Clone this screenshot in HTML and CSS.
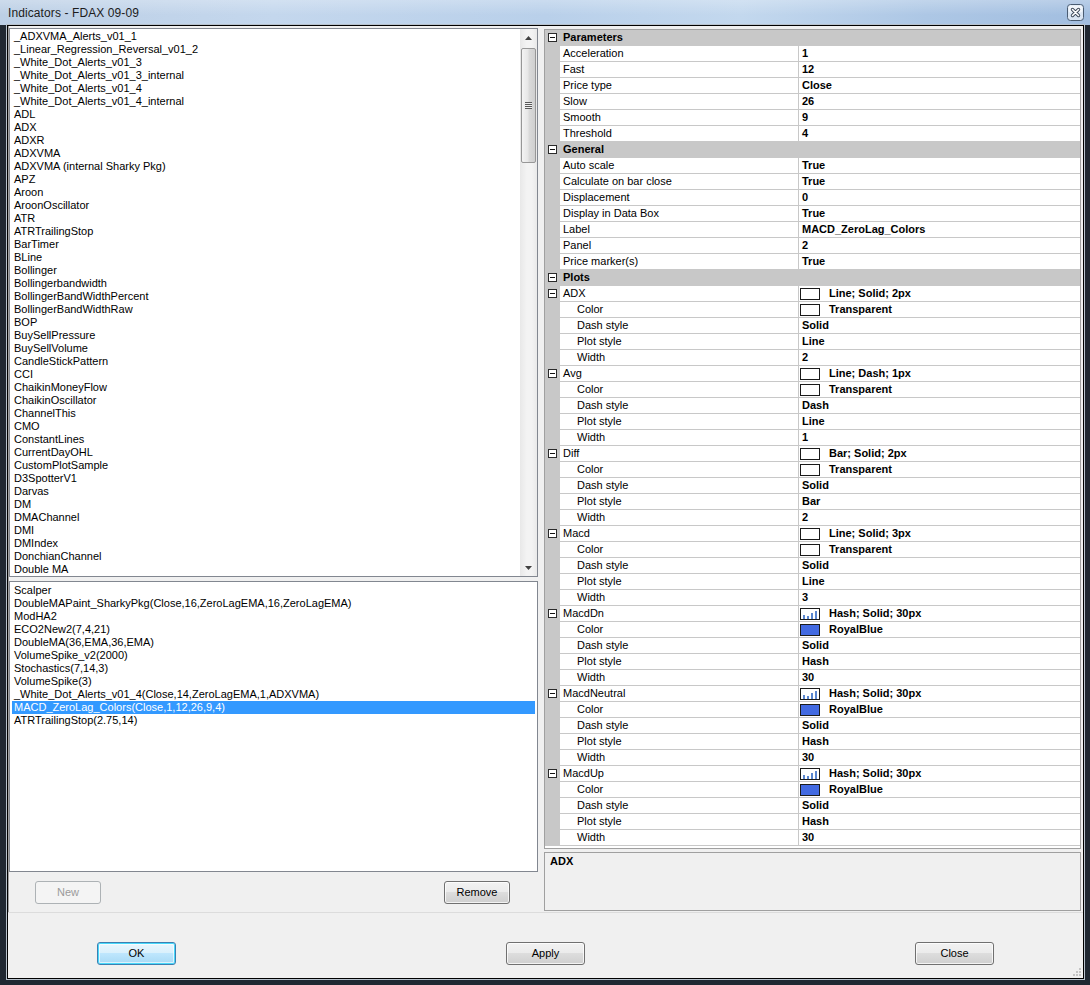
FILE: index.html
```html
<!DOCTYPE html>
<html lang="en">
<head>
  <meta charset="UTF-8">
  <title>Indicators - FDAX 09-09</title>
  <link rel="stylesheet" href="styles.css">
</head>
<body>
  <div class="window">
    <div class="titlebar">
      <span class="title">Indicators - FDAX 09-09</span>
      <button class="close-x">
        <svg width="17" height="17" viewBox="0 0 17 17">
          <rect x="0.5" y="0.5" width="16" height="16" rx="3" fill="#dbe6f3" stroke="#4a5c72"/>
          <rect x="1.5" y="1.5" width="14" height="7" rx="2" fill="#f2f6fb"/>
          <path d="M5.5 5.5L11.5 11.5M11.5 5.5L5.5 11.5" stroke="#3a4656" stroke-width="3.4" stroke-linecap="round"/>
          <path d="M5.5 5.5L11.5 11.5M11.5 5.5L5.5 11.5" stroke="#ffffff" stroke-width="1.6" stroke-linecap="round"/>
        </svg>
      </button>
    </div>
    <div class="frame">
      <div class="client">
        <div class="main">
          <div class="left">
            <div class="listbox list-top">
              <div class="items">
                <div class="item">_ADXVMA_Alerts_v01_1</div>
                <div class="item">_Linear_Regression_Reversal_v01_2</div>
                <div class="item">_White_Dot_Alerts_v01_3</div>
                <div class="item">_White_Dot_Alerts_v01_3_internal</div>
                <div class="item">_White_Dot_Alerts_v01_4</div>
                <div class="item">_White_Dot_Alerts_v01_4_internal</div>
                <div class="item">ADL</div>
                <div class="item">ADX</div>
                <div class="item">ADXR</div>
                <div class="item">ADXVMA</div>
                <div class="item">ADXVMA (internal Sharky Pkg)</div>
                <div class="item">APZ</div>
                <div class="item">Aroon</div>
                <div class="item">AroonOscillator</div>
                <div class="item">ATR</div>
                <div class="item">ATRTrailingStop</div>
                <div class="item">BarTimer</div>
                <div class="item">BLine</div>
                <div class="item">Bollinger</div>
                <div class="item">Bollingerbandwidth</div>
                <div class="item">BollingerBandWidthPercent</div>
                <div class="item">BollingerBandWidthRaw</div>
                <div class="item">BOP</div>
                <div class="item">BuySellPressure</div>
                <div class="item">BuySellVolume</div>
                <div class="item">CandleStickPattern</div>
                <div class="item">CCI</div>
                <div class="item">ChaikinMoneyFlow</div>
                <div class="item">ChaikinOscillator</div>
                <div class="item">ChannelThis</div>
                <div class="item">CMO</div>
                <div class="item">ConstantLines</div>
                <div class="item">CurrentDayOHL</div>
                <div class="item">CustomPlotSample</div>
                <div class="item">D3SpotterV1</div>
                <div class="item">Darvas</div>
                <div class="item">DM</div>
                <div class="item">DMAChannel</div>
                <div class="item">DMI</div>
                <div class="item">DMIndex</div>
                <div class="item">DonchianChannel</div>
                <div class="item">Double MA</div>
              </div>
              <div class="vscroll">
                <div class="sb-btn">
                  <svg width="7" height="4" viewBox="0 0 7 4"><path d="M3.5 0L7 4H0Z" fill="#404040"/></svg>
                </div>
                <div class="sb-track">
                  <div class="sb-thumb">
                    <div class="grip"></div>
                  </div>
                </div>
                <div class="sb-btn">
                  <svg width="7" height="4" viewBox="0 0 7 4"><path d="M0 0H7L3.5 4Z" fill="#404040"/></svg>
                </div>
              </div>
            </div>

            <div class="listbox list-bottom">
              <div class="item">Scalper</div>
              <div class="item">DoubleMAPaint_SharkyPkg(Close,16,ZeroLagEMA,16,ZeroLagEMA)</div>
              <div class="item">ModHA2</div>
              <div class="item">ECO2New2(7,4,21)</div>
              <div class="item">DoubleMA(36,EMA,36,EMA)</div>
              <div class="item">VolumeSpike_v2(2000)</div>
              <div class="item">Stochastics(7,14,3)</div>
              <div class="item">VolumeSpike(3)</div>
              <div class="item">_White_Dot_Alerts_v01_4(Close,14,ZeroLagEMA,1,ADXVMA)</div>
              <div class="item selected">MACD_ZeroLag_Colors(Close,1,12,26,9,4)</div>
              <div class="item">ATRTrailingStop(2.75,14)</div>
            </div>

            <div class="left-buttons">
              <button class="btn small" disabled>New</button>
              <button class="btn small">Remove</button>
            </div>
          </div>

          <div class="right">
            <div class="propgrid">
              <div class="pg-row cat"><div class="pg-gutter"><span class="minus"></span></div><div class="pg-name">Parameters</div></div>
              <div class="pg-row"><div class="pg-gutter"></div><div class="pg-name">Acceleration</div><div class="pg-value">1</div></div>
              <div class="pg-row"><div class="pg-gutter"></div><div class="pg-name">Fast</div><div class="pg-value">12</div></div>
              <div class="pg-row"><div class="pg-gutter"></div><div class="pg-name">Price type</div><div class="pg-value">Close</div></div>
              <div class="pg-row"><div class="pg-gutter"></div><div class="pg-name">Slow</div><div class="pg-value">26</div></div>
              <div class="pg-row"><div class="pg-gutter"></div><div class="pg-name">Smooth</div><div class="pg-value">9</div></div>
              <div class="pg-row"><div class="pg-gutter"></div><div class="pg-name">Threshold</div><div class="pg-value">4</div></div>

              <div class="pg-row cat"><div class="pg-gutter"><span class="minus"></span></div><div class="pg-name">General</div></div>
              <div class="pg-row"><div class="pg-gutter"></div><div class="pg-name">Auto scale</div><div class="pg-value">True</div></div>
              <div class="pg-row"><div class="pg-gutter"></div><div class="pg-name">Calculate on bar close</div><div class="pg-value">True</div></div>
              <div class="pg-row"><div class="pg-gutter"></div><div class="pg-name">Displacement</div><div class="pg-value">0</div></div>
              <div class="pg-row"><div class="pg-gutter"></div><div class="pg-name">Display in Data Box</div><div class="pg-value">True</div></div>
              <div class="pg-row"><div class="pg-gutter"></div><div class="pg-name">Label</div><div class="pg-value">MACD_ZeroLag_Colors</div></div>
              <div class="pg-row"><div class="pg-gutter"></div><div class="pg-name">Panel</div><div class="pg-value">2</div></div>
              <div class="pg-row"><div class="pg-gutter"></div><div class="pg-name">Price marker(s)</div><div class="pg-value">True</div></div>

              <div class="pg-row cat"><div class="pg-gutter"><span class="minus"></span></div><div class="pg-name">Plots</div></div>

              <div class="pg-row"><div class="pg-gutter"><span class="minus"></span></div><div class="pg-name">ADX</div><div class="pg-value swatched"><span class="swatch"></span>Line; Solid; 2px</div></div>
              <div class="pg-row"><div class="pg-gutter"></div><div class="pg-name sub">Color</div><div class="pg-value swatched"><span class="swatch"></span>Transparent</div></div>
              <div class="pg-row"><div class="pg-gutter"></div><div class="pg-name sub">Dash style</div><div class="pg-value">Solid</div></div>
              <div class="pg-row"><div class="pg-gutter"></div><div class="pg-name sub">Plot style</div><div class="pg-value">Line</div></div>
              <div class="pg-row"><div class="pg-gutter"></div><div class="pg-name sub">Width</div><div class="pg-value">2</div></div>

              <div class="pg-row"><div class="pg-gutter"><span class="minus"></span></div><div class="pg-name">Avg</div><div class="pg-value swatched"><span class="swatch"></span>Line; Dash; 1px</div></div>
              <div class="pg-row"><div class="pg-gutter"></div><div class="pg-name sub">Color</div><div class="pg-value swatched"><span class="swatch"></span>Transparent</div></div>
              <div class="pg-row"><div class="pg-gutter"></div><div class="pg-name sub">Dash style</div><div class="pg-value">Dash</div></div>
              <div class="pg-row"><div class="pg-gutter"></div><div class="pg-name sub">Plot style</div><div class="pg-value">Line</div></div>
              <div class="pg-row"><div class="pg-gutter"></div><div class="pg-name sub">Width</div><div class="pg-value">1</div></div>

              <div class="pg-row"><div class="pg-gutter"><span class="minus"></span></div><div class="pg-name">Diff</div><div class="pg-value swatched"><span class="swatch"></span>Bar; Solid; 2px</div></div>
              <div class="pg-row"><div class="pg-gutter"></div><div class="pg-name sub">Color</div><div class="pg-value swatched"><span class="swatch"></span>Transparent</div></div>
              <div class="pg-row"><div class="pg-gutter"></div><div class="pg-name sub">Dash style</div><div class="pg-value">Solid</div></div>
              <div class="pg-row"><div class="pg-gutter"></div><div class="pg-name sub">Plot style</div><div class="pg-value">Bar</div></div>
              <div class="pg-row"><div class="pg-gutter"></div><div class="pg-name sub">Width</div><div class="pg-value">2</div></div>

              <div class="pg-row"><div class="pg-gutter"><span class="minus"></span></div><div class="pg-name">Macd</div><div class="pg-value swatched"><span class="swatch"></span>Line; Solid; 3px</div></div>
              <div class="pg-row"><div class="pg-gutter"></div><div class="pg-name sub">Color</div><div class="pg-value swatched"><span class="swatch"></span>Transparent</div></div>
              <div class="pg-row"><div class="pg-gutter"></div><div class="pg-name sub">Dash style</div><div class="pg-value">Solid</div></div>
              <div class="pg-row"><div class="pg-gutter"></div><div class="pg-name sub">Plot style</div><div class="pg-value">Line</div></div>
              <div class="pg-row"><div class="pg-gutter"></div><div class="pg-name sub">Width</div><div class="pg-value">3</div></div>

              <div class="pg-row"><div class="pg-gutter"><span class="minus"></span></div><div class="pg-name">MacdDn</div><div class="pg-value swatched"><svg class="hash" width="20" height="12" viewBox="0 0 20 12"><rect x="0.5" y="0.5" width="19" height="11" fill="#fff" stroke="#1a1a1a"/><rect x="3" y="7" width="2" height="4" fill="#5a86cf"/><rect x="7" y="8" width="2" height="3" fill="#5a86cf"/><rect x="11" y="5" width="2" height="6" fill="#5a86cf"/><rect x="15" y="3" width="2" height="8" fill="#5a86cf"/></svg>Hash; Solid; 30px</div></div>
              <div class="pg-row"><div class="pg-gutter"></div><div class="pg-name sub">Color</div><div class="pg-value swatched"><span class="swatch royal"></span>RoyalBlue</div></div>
              <div class="pg-row"><div class="pg-gutter"></div><div class="pg-name sub">Dash style</div><div class="pg-value">Solid</div></div>
              <div class="pg-row"><div class="pg-gutter"></div><div class="pg-name sub">Plot style</div><div class="pg-value">Hash</div></div>
              <div class="pg-row"><div class="pg-gutter"></div><div class="pg-name sub">Width</div><div class="pg-value">30</div></div>

              <div class="pg-row"><div class="pg-gutter"><span class="minus"></span></div><div class="pg-name">MacdNeutral</div><div class="pg-value swatched"><svg class="hash" width="20" height="12" viewBox="0 0 20 12"><rect x="0.5" y="0.5" width="19" height="11" fill="#fff" stroke="#1a1a1a"/><rect x="3" y="7" width="2" height="4" fill="#5a86cf"/><rect x="7" y="8" width="2" height="3" fill="#5a86cf"/><rect x="11" y="5" width="2" height="6" fill="#5a86cf"/><rect x="15" y="3" width="2" height="8" fill="#5a86cf"/></svg>Hash; Solid; 30px</div></div>
              <div class="pg-row"><div class="pg-gutter"></div><div class="pg-name sub">Color</div><div class="pg-value swatched"><span class="swatch royal"></span>RoyalBlue</div></div>
              <div class="pg-row"><div class="pg-gutter"></div><div class="pg-name sub">Dash style</div><div class="pg-value">Solid</div></div>
              <div class="pg-row"><div class="pg-gutter"></div><div class="pg-name sub">Plot style</div><div class="pg-value">Hash</div></div>
              <div class="pg-row"><div class="pg-gutter"></div><div class="pg-name sub">Width</div><div class="pg-value">30</div></div>

              <div class="pg-row"><div class="pg-gutter"><span class="minus"></span></div><div class="pg-name">MacdUp</div><div class="pg-value swatched"><svg class="hash" width="20" height="12" viewBox="0 0 20 12"><rect x="0.5" y="0.5" width="19" height="11" fill="#fff" stroke="#1a1a1a"/><rect x="3" y="7" width="2" height="4" fill="#5a86cf"/><rect x="7" y="8" width="2" height="3" fill="#5a86cf"/><rect x="11" y="5" width="2" height="6" fill="#5a86cf"/><rect x="15" y="3" width="2" height="8" fill="#5a86cf"/></svg>Hash; Solid; 30px</div></div>
              <div class="pg-row"><div class="pg-gutter"></div><div class="pg-name sub">Color</div><div class="pg-value swatched"><span class="swatch royal"></span>RoyalBlue</div></div>
              <div class="pg-row"><div class="pg-gutter"></div><div class="pg-name sub">Dash style</div><div class="pg-value">Solid</div></div>
              <div class="pg-row"><div class="pg-gutter"></div><div class="pg-name sub">Plot style</div><div class="pg-value">Hash</div></div>
              <div class="pg-row"><div class="pg-gutter"></div><div class="pg-name sub">Width</div><div class="pg-value">30</div></div>
            </div>
            <div class="description">ADX</div>
          </div>
        </div>

        <div class="footer">
          <button class="btn default">OK</button>
          <button class="btn">Apply</button>
          <button class="btn">Close</button>
        </div>

        <svg class="grip-corner" width="10" height="10" viewBox="0 0 10 10">
          <rect x="7" y="1" width="2" height="2" fill="#c4c4c4"/>
          <rect x="4" y="4" width="2" height="2" fill="#c4c4c4"/>
          <rect x="7" y="4" width="2" height="2" fill="#c4c4c4"/>
          <rect x="1" y="7" width="2" height="2" fill="#c4c4c4"/>
          <rect x="4" y="7" width="2" height="2" fill="#c4c4c4"/>
          <rect x="7" y="7" width="2" height="2" fill="#c4c4c4"/>
        </svg>
      </div>
    </div>
  </div>
</body>
</html>
```

FILE: styles.css
```css
* {
  box-sizing: border-box;
}
body {
  margin: 0;
  padding: 0;
  font-family: "Liberation Sans", Arial, sans-serif;
  font-size: 11px;
  color: #000;
}
button {
  font-family: inherit;
  font-size: 11px;
}

.window {
  width: 1090px;
  height: 985px;
  display: flex;
  flex-direction: column;
  background: #202832;
}
.titlebar {
  height: 25px;
  flex: none;
  display: flex;
  align-items: center;
  justify-content: space-between;
  padding: 0 6px 0 8px;
  background:
    linear-gradient(180deg, rgba(255,255,255,0.25), rgba(255,255,255,0) 60%),
    linear-gradient(90deg, #bccfe5 0%, #c4d7ed 25%, #b9d0ea 50%, #c3d8ee 68%, #adc7e5 85%, #a2bee0 100%);
}
.title {
  font-size: 12px;
  color: #1c1c1c;
  letter-spacing: 0.1px;
}
.close-x {
  width: 17px;
  height: 17px;
  padding: 0;
  border: none;
  background: transparent;
  display: block;
}
.close-x svg {
  display: block;
}

.frame {
  flex: 1;
  display: flex;
  padding: 0 6px 6px 7px;
}
.client {
  flex: 1;
  position: relative;
  display: flex;
  flex-direction: column;
  background: #f0f0f0;
  border: 1px solid #000;
  box-shadow: 0 0 0 1px #b8c2cc;
}

.main {
  height: 887px;
  flex: none;
  display: flex;
  border-bottom: 1px solid #dcdcdc;
}
.left {
  width: 533px;
  flex: none;
  display: flex;
  flex-direction: column;
  padding-top: 2px;
  border-left: 1px solid #a0a0a0;
}
.listbox {
  width: 529px;
  background: #fff;
  border: 1px solid #828790;
}
.list-top {
  height: 549px;
  display: flex;
}
.list-top .items {
  flex: 1;
  padding: 1px 2px;
  overflow: hidden;
}
.list-bottom {
  height: 291px;
  margin-top: 4px;
  padding: 2px 2px;
}
.item {
  height: 13px;
  line-height: 13px;
  padding-left: 2px;
  white-space: nowrap;
}
.item.selected {
  background: #3399ff;
  color: #fff;
}

.vscroll {
  width: 17px;
  flex: none;
  display: flex;
  flex-direction: column;
  background: linear-gradient(90deg, #e8e8e8, #f3f3f3 40%, #f3f3f3 70%, #e9e9e9);
}
.sb-btn {
  height: 17px;
  display: flex;
  align-items: center;
  justify-content: center;
}
.sb-btn svg {
  display: block;
}
.sb-track {
  flex: 1;
  padding: 2px 1px 0 1px;
}
.sb-thumb {
  height: 115px;
  border: 1px solid #979797;
  border-radius: 2px;
  background: linear-gradient(90deg, #f4f4f4, #e7e7e7 45%, #dadada 55%, #cfcfcf);
  display: flex;
  align-items: center;
  justify-content: center;
}
.grip {
  width: 7px;
  height: 7px;
  background: repeating-linear-gradient(180deg, #595959 0, #595959 1px, #f0f0f0 1px, #f0f0f0 2px);
}

.left-buttons {
  width: 529px;
  display: flex;
  justify-content: space-between;
  margin-top: 9px;
  padding: 0 28px 0 26px;
}

.btn {
  width: 79px;
  height: 23px;
  padding: 0 0 1px 0;
  border: 1px solid #707070;
  border-radius: 3px;
  color: #000;
  background: linear-gradient(180deg, #f2f2f2 0%, #ebebeb 48%, #dddddd 50%, #cfcfcf 100%);
  box-shadow: inset 0 0 0 1px rgba(255,255,255,0.75);
}
.btn.small {
  width: 66px;
}
.btn.default {
  border-color: #3c7fb1;
  box-shadow: inset 0 0 0 1px #48d8fb, inset 0 0 0 2px rgba(255,255,255,0.6);
  background: linear-gradient(180deg, #eaf6fd 0%, #d9f0fc 48%, #bee6fd 50%, #a7d9f5 100%);
}
.btn:disabled {
  border-color: #adb2b5;
  color: #9b9b9b;
  background: #f4f4f4;
  box-shadow: none;
}

.right {
  flex: 1;
  display: flex;
  flex-direction: column;
  padding: 3px 2px 0 3px;
}
.propgrid {
  height: 820px;
  flex: none;
  background: #fff;
  border: 1px solid #a0a0a0;
  overflow: hidden;
}
.pg-row {
  height: 16px;
  display: flex;
  border-bottom: 1px solid #c8c8c8;
  line-height: 15px;
}
.pg-gutter {
  width: 15px;
  flex: none;
  background: #c8c8c8;
  display: flex;
  align-items: center;
  justify-content: center;
}
.minus {
  width: 9px;
  height: 9px;
  border: 1px solid #2b2b2b;
  background: #fff linear-gradient(#111, #111) center / 5px 1px no-repeat;
}
.pg-name {
  width: 239px;
  flex: none;
  padding-left: 3px;
  border-right: 1px solid #c8c8c8;
  white-space: nowrap;
  overflow: hidden;
}
.pg-name.sub {
  padding-left: 17px;
}
.pg-value {
  flex: 1;
  padding-left: 3px;
  font-weight: bold;
  white-space: nowrap;
  display: flex;
  align-items: center;
}
.pg-value.swatched {
  padding-left: 1px;
}
.swatch {
  width: 20px;
  height: 12px;
  margin-right: 9px;
  border: 1px solid #1a1a1a;
  background: #fff;
  flex: none;
}
.swatch.royal {
  background: #4169e1;
}
.hash {
  margin-right: 9px;
  flex: none;
  display: block;
}
.pg-row.cat {
  background: #c8c8c8;
}
.pg-row.cat .pg-name {
  flex: 1;
  border-right: none;
  font-weight: bold;
}

.description {
  height: 59px;
  margin-top: 3px;
  border: 1px solid #a0a0a0;
  background: #f0f0f0;
  padding: 2px 5px;
  font-weight: bold;
  line-height: 13px;
}

.footer {
  flex: 1;
  display: flex;
  align-items: flex-start;
  justify-content: space-between;
  padding: 29px 89px 0 89px;
}

.grip-corner {
  position: absolute;
  right: 1px;
  bottom: 1px;
}
```
